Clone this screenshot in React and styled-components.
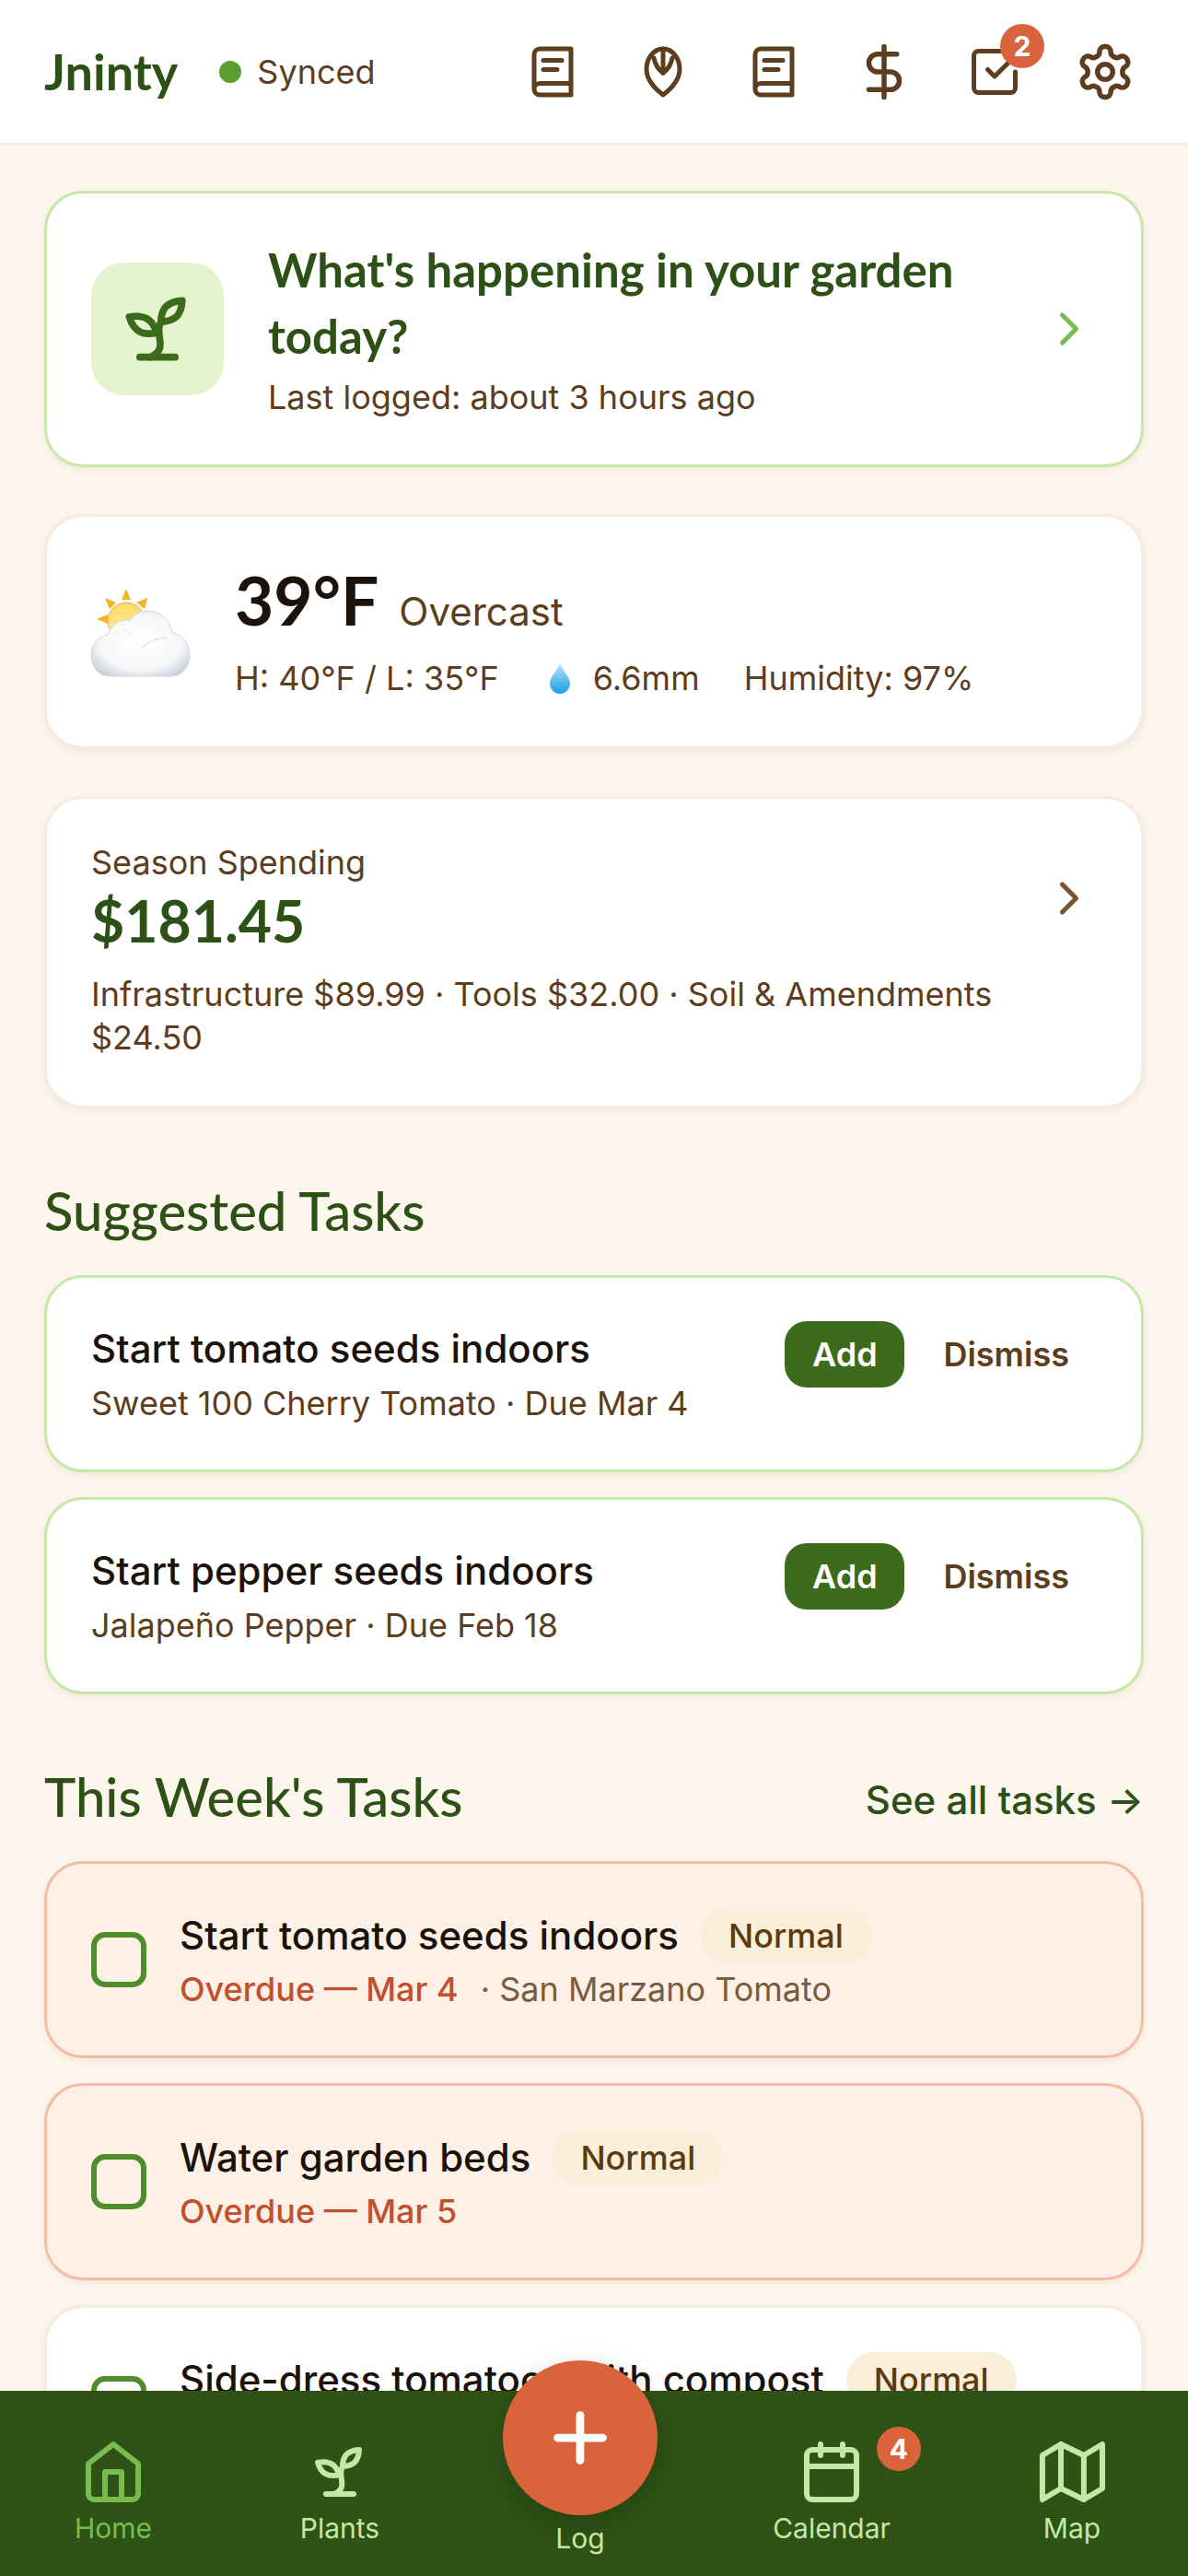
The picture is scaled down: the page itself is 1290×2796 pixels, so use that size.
import React from 'react';
import styled, { createGlobalStyle } from 'styled-components';

const BODY = '"Inter", "Liberation Sans", sans-serif';
const HEAD = '"Lato", "Open Sans", sans-serif';

const Global = createGlobalStyle`
  html, body { margin: 0; padding: 0; background: #fdf6ec; }
  * { box-sizing: border-box; }
  #root { width: 1290px; height: 2796px; }
`;

const Page = styled.div`
  width: 1290px; height: 2796px; display: flex; flex-direction: column;
  overflow: hidden; background: #fdf6ec; font-family: ${BODY}; color: #5c3d1e;
`;
const Header = styled.header`
  flex: none; height: 158px; background: #fff; border-bottom: 3px solid #f7ecde;
  display: flex; align-items: center; justify-content: space-between; padding: 0 60px 0 48px;
`;
const Brand = styled.div`display: flex; align-items: center;`;
const Logo = styled.div`
  font-family: ${HEAD}; font-weight: 700; font-size: 54px; line-height: 84px; color: #2d5016;
`;
const StatusDot = styled.span`
  width: 24px; height: 24px; border-radius: 50%; background: #5a9e2f; margin: 0 17px 0 45px;
`;
const StatusText = styled.span`font-size: 36px; color: #5c3d1e;`;
const IconBar = styled.nav`display: flex; gap: 60px;`;
const IconButton = styled.span`
  position: relative; display: flex; align-items: center; justify-content: center;
  width: 60px; height: 60px; color: #5c3d1e;
  & > svg { flex: none; }
`;
const Count = styled.span`
  position: absolute; width: 48px; height: 48px; border-radius: 50%; background: #d9633a; color: #fff;
  font-size: 30px; font-weight: 700; display: flex; align-items: center; justify-content: center;
  top: ${p => p.$top}px; right: ${p => p.$right}px;
`;

const Main = styled.main`
  flex: 1; min-height: 0; overflow: hidden; padding: 49px 48px 0; display: flex; flex-direction: column;
`;
const Card = styled.section`
  background: ${p => (p.$overdue ? '#fdf1e7' : '#fff')};
  border: 3px solid ${p => (p.$overdue ? '#f4bca5' : p.$green ? '#c5e8a7' : '#f6ecdd')};
  border-radius: 42px;
  box-shadow: 0 3px 9px rgba(92, 61, 30, 0.08);
  padding: 45px 48px;
  display: flex;
  align-items: ${p => p.$align || 'center'};
  flex: none;
`;
const HeroCard = styled(Card)`height: 300px; margin-bottom: 51px; padding: 0 48px;`;
const HeroTile = styled.div`
  flex: none; width: 144px; height: 144px; border-radius: 36px; background: #e3f4cf; color: #3d6b1c;
  display: flex; align-items: center; justify-content: center; margin-right: 48px;
`;
const Grow = styled.div`flex: 1; min-width: 0;`;
const HeroTitle = styled.h2`
  margin: 0; font-family: ${HEAD}; font-weight: 700; font-size: 51px; line-height: 72px; color: #2d5016;
`;
const HeroSub = styled.p`margin: 3px 0 0; font-size: 36px; line-height: 54px; color: #5c3d1e;`;

const WeatherCard = styled(Card)`height: 255px; margin-bottom: 51px; padding: 0 48px 6px;`;
const WeatherArt = styled.div`flex: none; width: 114px; height: 100px; margin: 6px 45px 0 -3px;`;
const TempRow = styled.div`display: flex; align-items: baseline; gap: 22px;`;
const Temp = styled.span`font-family: ${HEAD}; font-weight: 700; font-size: 73px; line-height: 96px; color: #1c120a;`;
const Condition = styled.span`font-size: 42px; color: #5c3d1e;`;
const StatRow = styled.div`display: flex; gap: 48px; margin-top: 10px; font-size: 36px; line-height: 54px; color: #5c3d1e;`;
const Rain = styled.span`display: inline-flex; align-items: center; gap: 24px; margin-left: 6px;`;

const SpendCard = styled(Card)`
  height: 339px; padding: 45px 48px 0; margin-bottom: 72px; flex-direction: column; align-items: stretch;
`;
const SpendTop = styled.div`display: flex; align-items: center;`;
const SpendLabel = styled.div`font-size: 36px; line-height: 48px; color: #5c3d1e;`;
const SpendTotal = styled.div`font-family: ${HEAD}; font-weight: 700; font-size: 62.500px; line-height: 78px; color: #2d5016;`;
const SpendDetail = styled.div`margin-top: 18px; padding-right: 60px; font-size: 36px; line-height: 47px; color: #5c3d1e;`;

const SectionHead = styled.div`
  display: flex; align-items: center; justify-content: space-between; height: 84px; flex: none;
  margin-top: ${p => p.$gap || 0}px;
`;
const SectionTitle = styled.h3`margin: 0; padding-bottom: 7px; font-family: ${HEAD}; font-weight: 500; font-size: 58px; color: #2d5016;`;
const SeeAll = styled.span`font-size: 42px; font-weight: 500; color: #2d5016; display: flex; align-items: center; gap: 9px;`;

const TaskList = styled.div`display: flex; flex-direction: column; gap: 27px; margin-top: 25px; flex: none;`;
const SuggestCard = styled(Card)`height: 214px; padding: 47px 48px;`;
const TaskTitle = styled.div`font-size: 42px; font-weight: 500; line-height: 54px; color: #1c120a;`;
const SuggestTitle = styled(TaskTitle)`padding-top: 3px;`;
const TaskMeta = styled.div`margin-top: 5px; font-size: 36px; line-height: 54px; color: #5c3d1e;`;
const AddButton = styled.span`
  flex: none; width: 130px; height: 72px; border-radius: 24px; background: #3d6b1c; color: #fff;
  font-size: 36px; font-weight: 600; display: flex; align-items: center; justify-content: center;
`;
const DismissButton = styled.span`
  flex: none; height: 72px; margin-left: 12px; padding: 0 30px; font-size: 36px; font-weight: 600; color: #5c3d1e;
  display: flex; align-items: center; justify-content: center;
`;
const ScheduleCard = styled(Card)`height: 214px; padding: 0 48px;`;
const Check = styled.span`
  flex: none; width: 60px; height: 60px; border: 6px solid #4f8c2a; border-radius: 15px; margin-right: 36px;
`;
const TaskBody = styled.div`flex: 1; min-width: 0; padding-top: 3px;`;
const TitleRow = styled.div`display: flex; align-items: center; gap: 24px;`;
const Priority = styled.span`
  flex: none; height: 60px; padding: 0 30px; border-radius: 30px; background: #f9eeda; color: #5c3a10;
  font-size: 36px; font-weight: 500; display: flex; align-items: center;
`;
const MetaLine = styled.div`display: flex; min-height: 54px; margin-top: 1px; font-size: 36px; line-height: 54px;`;
const Overdue = styled.span`color: #c0502e; font-weight: 500;`;
const Plant = styled.span`color: #7a5c3e; margin-left: 24px;`;

const BottomNav = styled.nav`
  position: relative; flex: none; height: 201px; background: #2f5316;
  display: grid; grid-template-columns: 246px 246px 276px 270px 252px; justify-items: center; padding-top: 52px;
`;
const NavItem = styled.div`
  position: relative; display: flex; flex-direction: column; align-items: center; height: fit-content;
  color: ${p => (p.$active ? '#78bb4f' : '#c5e8a7')}; font-size: 30px; line-height: 36px; gap: 7px;
`;
const Fab = styled.div`
  width: 168px; height: 168px; border-radius: 50%; background: #d9633a; color: #fff; margin-top: -85px;
  display: flex; align-items: center; justify-content: center; box-shadow: 0 12px 36px rgba(0, 0, 0, 0.2);
`;
const NavBadge = styled.span`
  position: absolute; width: 48px; height: 48px; border-radius: 50%; background: #d9633a; color: #fff;
  font-size: 30px; font-weight: 700; display: flex; align-items: center; justify-content: center;
  top: -13px; right: -33px;
`;

const Icon = ({ size = 72, sw = 2, children }) => (
  <svg width={size} height={size} viewBox="0 0 24 24" fill="none" stroke="currentColor" strokeWidth={sw}
    strokeLinecap="round" strokeLinejoin="round" style={{ display: 'block' }}>{children}</svg>
);
const Book = () => (
  <Icon size={60}><path d="M4 19.5v-15A2.5 2.5 0 0 1 6.5 2H20v20H6.5a2.5 2.5 0 0 1 0-5H20" /><path d="M8 7h8" /><path d="M8 11h6" /></Icon>
);
const Seed = () => (
  <Icon size={60}>
    <path d="M12 2C8 2 4.8 6 4.8 10.8c0 4 3 8 7.2 11.200 4.200-3.200 7.200-7.200 7.200-11.200C19.200 6 16 2 12 2z" />
    <path d="M12 2v10.500" /><path d="M8 6c.5 2.500 2 5 4 6.500 2-1.500 3.500-4 4-6.500" />
  </Icon>
);
const Dollar = () => (
  <Icon size={66}><path d="M12 2v20" /><path d="M17 5H9.500a3.500 3.500 0 0 0 0 7h5a3.500 3.500 0 0 1 0 7H6" /></Icon>
);
const CheckSquare = () => (
  <Icon size={60}><path d="m9 11 3 3L22 4" /><path d="M21 12v7a2 2 0 0 1-2 2H5a2 2 0 0 1-2-2V5a2 2 0 0 1 2-2h11" /></Icon>
);
const Gear = () => (
  <Icon size={66}>
    <path d="M12.220 2h-.44a2 2 0 0 0-2 2v.18a2 2 0 0 1-1 1.730l-.43.25a2 2 0 0 1-2 0l-.15-.08a2 2 0 0 0-2.730.730l-.22.38a2 2 0 0 0 .73 2.730l.15.1a2 2 0 0 1 1 1.720v.51a2 2 0 0 1-1 1.740l-.15.09a2 2 0 0 0-.73 2.730l.22.38a2 2 0 0 0 2.730.730l.15-.08a2 2 0 0 1 2 0l.43.25a2 2 0 0 1 1 1.730V20a2 2 0 0 0 2 2h.44a2 2 0 0 0 2-2v-.18a2 2 0 0 1 1-1.730l.43-.25a2 2 0 0 1 2 0l.15.08a2 2 0 0 0 2.730-.730l.22-.39a2 2 0 0 0-.73-2.730l-.15-.08a2 2 0 0 1-1-1.740v-.5a2 2 0 0 1 1-1.740l.15-.09a2 2 0 0 0 .73-2.730l-.22-.38a2 2 0 0 0-2.730-.730l-.15.08a2 2 0 0 1-2 0l-.43-.25a2 2 0 0 1-1-1.730V4a2 2 0 0 0-2-2z" />
    <circle cx="12" cy="12" r="3" />
  </Icon>
);
const Sprout = ({ size }) => (
  <Icon size={size}>
    <path d="M7 20h10" /><path d="M10 20c5.500-2.500.8-6.400 3-10" />
    <path d="M9.500 9.400c1.100.8 1.800 2.200 2.300 3.700-2 .4-3.500.4-4.800-.3-1.200-.6-2.300-1.900-3-4.200 2.800-.5 4.400 0 5.500.8z" />
    <path d="M14.100 6a7 7 0 0 0-1.100 4c1.900-.1 3.300-.6 4.300-1.400 1-1 1.600-2.300 1.700-4.600-2.700.1-4 1-4.900 2z" />
  </Icon>
);
const Chevron = ({ color }) => (
  <svg width="60" height="60" viewBox="0 0 24 24" fill="none" stroke={color} strokeWidth="2" strokeLinecap="round" strokeLinejoin="round" style={{ flex: 'none' }}>
    <path d="m9 18 6-6-6-6" />
  </svg>
);
const SunCloud = () => (
  <svg width="114" height="100" viewBox="0 0 114 100" style={{ display: 'block' }}>
    <defs>
      <linearGradient id="sunFill" x1="0" y1="0" x2="0" y2="1"><stop offset="0" stopColor="#fbd968" /><stop offset="1" stopColor="#fdf0a0" /></linearGradient>
      <radialGradient id="cloudFill" cx="0.5" cy="0.48" r="0.62">
        <stop offset="0" stopColor="#ffffff" /><stop offset="0.68" stopColor="#f6f7f9" /><stop offset="1" stopColor="#c4ced8" />
      </radialGradient>
    </defs>
    <g fill="#f6b324">
      <path d="M41 3 36 15h10z" /><path d="M18 13 23 25l7-7z" /><path d="M64 13 52 18l9 7z" /><path d="M9 36l12-5v10z" />
    </g>
    <circle cx="41" cy="38" r="20" fill="url(#sunFill)" stroke="#f3a64c" strokeWidth="1" />
    <path d="M24 98C10 98 3 87 3 75 3 62 12 54 21 53 24 44 32 36 46 37 50 30 57 27 64 27 78 27 89 37 91 51 102 52 110 63 110 75 110 88 101 98 90 98Z" fill="url(#cloudFill)" stroke="#d3dae2" strokeWidth="1" />
    <path d="M58 68c5-7 16-11 28-12" fill="none" stroke="#e1e6eb" strokeWidth="1.500" />
    <path d="M38 47c4 1 6 3 7 6" fill="none" stroke="#e6eaee" strokeWidth="1.500" />
  </svg>
);
const Droplet = () => (
  <svg width="24" height="34" viewBox="0 0 24 34" style={{ display: 'block' }}>
    <defs><linearGradient id="dropFill" x1="0" y1="0" x2="0" y2="1"><stop offset="0" stopColor="#bfe4f5" /><stop offset="1" stopColor="#1a9fe3" /></linearGradient></defs>
    <path d="M12 0C13 7 23 15 23 23a11 11 0 0 1-22 0C1 15 11 7 12 0Z" fill="url(#dropFill)" />
  </svg>
);

const Suggestion = ({ title, meta }) => (
  <SuggestCard $green $align="flex-start">
    <Grow><SuggestTitle>{title}</SuggestTitle><TaskMeta>{meta}</TaskMeta></Grow>
    <AddButton>Add</AddButton>
    <DismissButton>Dismiss</DismissButton>
  </SuggestCard>
);
const Task = ({ title, due, plant, overdue }) => (
  <ScheduleCard $overdue={overdue}>
    <Check />
    <TaskBody>
      <TitleRow><TaskTitle>{title}</TaskTitle><Priority>Normal</Priority></TitleRow>
      <MetaLine>{due && <Overdue>{due}</Overdue>}{plant && <Plant>· {plant}</Plant>}</MetaLine>
    </TaskBody>
  </ScheduleCard>
);

export default function App() {
  return (
    <Page>
      <Global />
      <Header>
        <Brand><Logo>Jninty</Logo><StatusDot /><StatusText>Synced</StatusText></Brand>
        <IconBar>
          <IconButton><Book /></IconButton>
          <IconButton><Seed /></IconButton>
          <IconButton><Book /></IconButton>
          <IconButton><Dollar /></IconButton>
          <IconButton><CheckSquare /><Count $top={-22} $right={-24}>2</Count></IconButton>
          <IconButton><Gear /></IconButton>
        </IconBar>
      </Header>
      <Main>
        <HeroCard $green>
          <HeroTile><Sprout size={92} /></HeroTile>
          <Grow>
            <HeroTitle>What's happening in your garden today?</HeroTitle>
            <HeroSub>Last logged: about 3 hours ago</HeroSub>
          </Grow>
          <Chevron color="#78bb4f" />
        </HeroCard>
        <WeatherCard>
          <WeatherArt><SunCloud /></WeatherArt>
          <Grow>
            <TempRow><Temp>39°F</Temp><Condition>Overcast</Condition></TempRow>
            <StatRow>
              <span>H: 40°F / L: 35°F</span>
              <Rain><Droplet />6.6mm</Rain>
              <span>Humidity: 97%</span>
            </StatRow>
          </Grow>
        </WeatherCard>
        <SpendCard>
          <SpendTop>
            <Grow>
              <SpendLabel>Season Spending</SpendLabel>
              <SpendTotal>$181.45</SpendTotal>
            </Grow>
            <Chevron color="#7a5230" />
          </SpendTop>
          <SpendDetail>Infrastructure $89.99 · Tools $32.00 · Soil &amp; Amendments $24.50</SpendDetail>
        </SpendCard>
        <SectionHead><SectionTitle>Suggested Tasks</SectionTitle></SectionHead>
        <TaskList>
          <Suggestion title="Start tomato seeds indoors" meta="Sweet 100 Cherry Tomato · Due Mar 4" />
          <Suggestion title="Start pepper seeds indoors" meta="Jalapeño Pepper · Due Feb 18" />
        </TaskList>
        <SectionHead $gap={72}>
          <SectionTitle>This Week's Tasks</SectionTitle>
          <SeeAll>See all tasks →</SeeAll>
        </SectionHead>
        <TaskList>
          <Task overdue title="Start tomato seeds indoors" due="Overdue — Mar 4" plant="San Marzano Tomato" />
          <Task overdue title="Water garden beds" due="Overdue — Mar 5" />
          <Task title="Side-dress tomatoes with compost" />
        </TaskList>
      </Main>
      <BottomNav>
        <NavItem $active>
          <Icon><path d="M3 9l9-7 9 7v11a2 2 0 0 1-2 2H5a2 2 0 0 1-2-2z" /><path d="M9 22V12h6v10" /></Icon>
          Home
        </NavItem>
        <NavItem><Sprout size={72} />Plants</NavItem>
        <NavItem>
          <Fab><Icon size={84} sw={2.5}><path d="M5 12h14" /><path d="M12 5v14" /></Icon></Fab>
          Log
        </NavItem>
        <NavItem>
          <Icon><path d="M8 2v4" /><path d="M16 2v4" /><rect x="3" y="4" width="18" height="18" rx="2" /><path d="M3 10h18" /></Icon>
          Calendar
          <NavBadge>4</NavBadge>
        </NavItem>
        <NavItem>
          <Icon>
            <path d="M1.300 6 8 2l8.300 4L23 2v16l-6.700 4L8 18l-6.700 4z" /><path d="M8 2v16" /><path d="M16.300 6v16" />
          </Icon>
          Map
        </NavItem>
      </BottomNav>
    </Page>
  );
}
